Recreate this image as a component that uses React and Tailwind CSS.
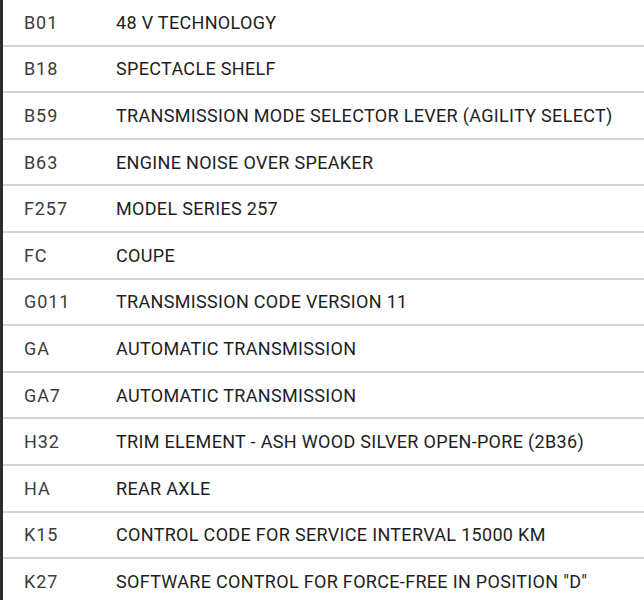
const rows = [
  { code: 'B01', text: '48 V TECHNOLOGY' },
  { code: 'B18', text: 'SPECTACLE SHELF' },
  { code: 'B59', text: 'TRANSMISSION MODE SELECTOR LEVER (AGILITY SELECT)' },
  { code: 'B63', text: 'ENGINE NOISE OVER SPEAKER' },
  { code: 'F257', text: 'MODEL SERIES 257' },
  { code: 'FC', text: 'COUPE' },
  { code: 'G011', text: 'TRANSMISSION CODE VERSION 11' },
  { code: 'GA', text: 'AUTOMATIC TRANSMISSION' },
  { code: 'GA7', text: 'AUTOMATIC TRANSMISSION' },
  { code: 'H32', text: 'TRIM ELEMENT - ASH WOOD SILVER OPEN-PORE (2B36)' },
  { code: 'HA', text: 'REAR AXLE' },
  { code: 'K15', text: 'CONTROL CODE FOR SERVICE INTERVAL 15000 KM' },
  { code: 'K27', text: 'SOFTWARE CONTROL FOR FORCE-FREE IN POSITION "D"' },
];

export default function App() {
  return (
    <div className="h-[600px] w-[644px] overflow-hidden bg-white flex font-['Roboto',sans-serif]">
      {/* dark edge on the left */}
      <div className="w-[3px] shrink-0 bg-[#2c2c30]" />

      <div className="flex-1">
        {rows.map((row) => (
          <div
            key={row.code}
            className="flex items-center h-[46.6px] border-b-2 border-[#d4d4d4] text-[18px]"
          >
            <div className="w-[113px] shrink-0 pl-[21px] tracking-[0.9px] text-[#3c3c3c]">{row.code}</div>
            <div className="text-[#1e1e1e] tracking-[0.32px] whitespace-nowrap">{row.text}</div>
          </div>
        ))}
      </div>
    </div>
  );
}
